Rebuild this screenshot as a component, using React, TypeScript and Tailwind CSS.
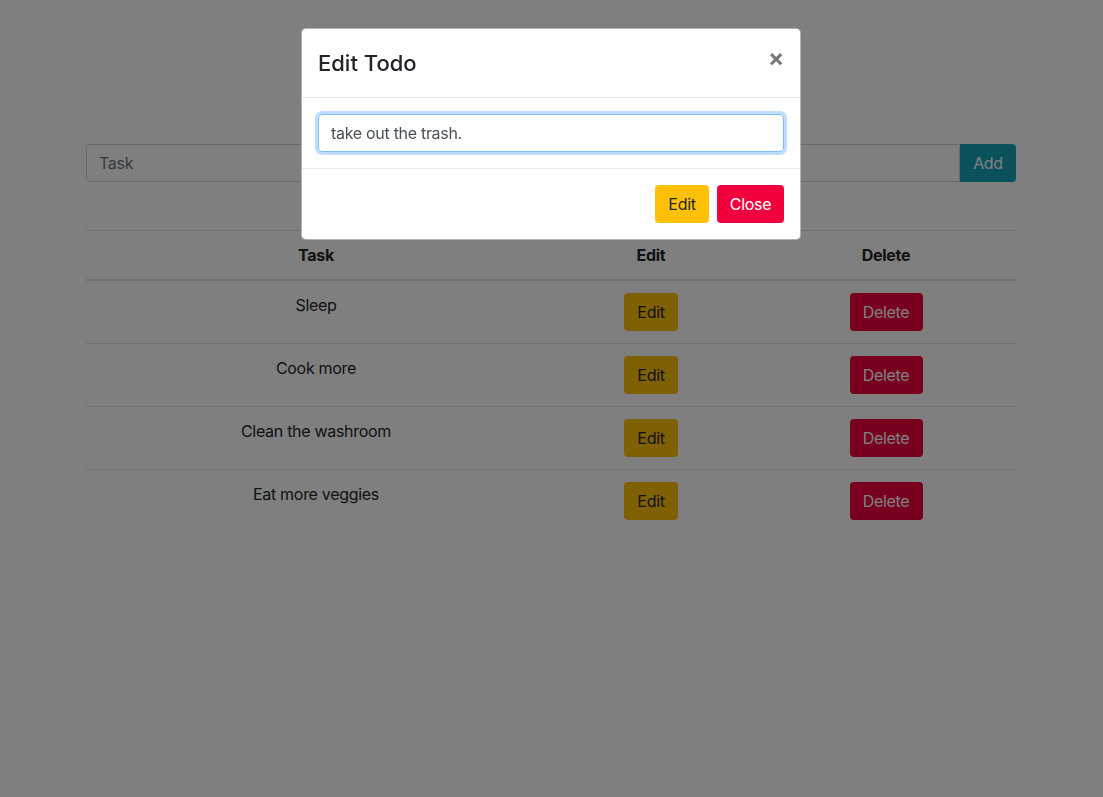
import React from "react";

const rows = ["Sleep", "Cook more", "Clean the washroom", "Eat more veggies"];

export default function App() {
  return (
    <div
      className="relative min-h-[797px] bg-white text-[#212529] tracking-[-0.3px]"
      style={{ fontFamily: "Inter, 'Noto Sans', sans-serif" }}
    >
      <div className="ml-[86px] w-[930px] pt-[144px]">
        <div className="flex h-[38px]">
          <input
            className="h-[38px] flex-1 rounded-l-[4px] border border-[#ced4da] px-3 text-base text-[#495057] placeholder:text-[#6c757d] outline-none"
            placeholder="Task"
            readOnly
          />
          <button className="h-[38px] w-[56px] rounded-r-[4px] bg-[#17a2b8] text-base text-white">
            Add
          </button>
        </div>
        <table className="mt-[48px] w-full border-collapse text-base">
          <thead>
            <tr className="h-[49px] border-t border-b-2 border-[#dee2e6]">
              <th className="w-[460px] text-center font-bold">Task</th>
              <th className="w-[210px] text-center font-bold">Edit</th>
              <th className="text-center font-bold">Delete</th>
            </tr>
          </thead>
          <tbody>
            {rows.map((r, i) => (
              <tr key={r} className={i > 0 ? "border-t border-[#dee2e6]" : ""}>
                <td className="h-[63px] p-3 align-top text-center leading-6">{r}</td>
                <td className="p-3 text-center align-top">
                  <button className="h-[38px] w-[54px] rounded-[4px] bg-[#ffc107] text-base text-[#212529]">
                    Edit
                  </button>
                </td>
                <td className="p-3 text-center align-top">
                  <button className="h-[38px] w-[73px] rounded-[4px] bg-[#f0003c] text-base text-white">
                    Delete
                  </button>
                </td>
              </tr>
            ))}
          </tbody>
        </table>
      </div>

      <div className="fixed inset-0 bg-black/50" />

      <div className="absolute left-[301px] top-[28px] w-[500px] rounded-[5px] border border-black/30 bg-white">
        <div className="flex h-[69px] items-start justify-between border-b border-[#e9ecef] px-4">
          <h5 className="mt-[19px] text-[22px] font-medium leading-[30px] tracking-normal text-[#212529]">Edit Todo</h5>
          <button className="mt-[17px] text-[24px] font-bold leading-none text-[#777]">×</button>
        </div>
        <div className="border-b border-[#e9ecef] p-4">
          <input
            className="h-[38px] w-full rounded-[4px] border border-[#80bdff] px-3 text-base text-[#495057] shadow-[0_0_0_3px_rgba(0,123,255,0.25)] outline-none"
            value="take out the trash."
            readOnly
          />
        </div>
        <div className="flex justify-end gap-2 px-4 pb-4 pt-4">
          <button className="h-[38px] w-[54px] rounded-[4px] bg-[#ffc107] text-base text-[#212529]">
            Edit
          </button>
          <button className="h-[38px] w-[67px] rounded-[4px] bg-[#f0003c] text-base text-white">
            Close
          </button>
        </div>
      </div>
    </div>
  );
}
